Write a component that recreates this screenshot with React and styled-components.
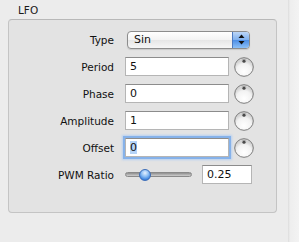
import React from 'react';
import styled, { createGlobalStyle } from 'styled-components';

const Global = createGlobalStyle`
  html, body { margin: 0; padding: 0; background: #ececec; }
  body { font-family: "DejaVu Sans", "Liberation Sans", sans-serif; }
`;

const Window = styled.div`
  width: 299px;
  height: 242px;
  display: flex;
  overflow: hidden;
  background: #ececec;
`;

const Main = styled.div`
  flex: 1;
  padding-left: 8px;
`;

const SideStrip = styled.div`
  width: 11px;
  background: linear-gradient(to right, #dcdcdc 0, #eeeeee 2px, #f3f3f3 100%);
`;

const Title = styled.div`
  height: 19px;
  padding-left: 10px;
  font-size: 10.5px;
  line-height: 20px;
  color: #1a1a1a;
`;

const Box = styled.div`
  width: 267px;
  height: 186px;
  border: 1px solid #c4c4c4;
  border-top-color: #b8b8b8;
  border-radius: 4px;
  background: #e3e3e3;
  padding-top: 6px;
  box-sizing: content-box;
`;

const Row = styled.div`
  height: 27px;
  display: flex;
  align-items: center;
`;

const Label = styled.div`
  width: 105px;
  text-align: right;
  font-size: 10.5px;
  color: #111;
  margin-right: ${p => (p.$popup ? 13 : 11)}px;
`;

const Field = styled.div`
  width: ${p => p.$w || 104}px;
  height: 19px;
  box-sizing: border-box;
  background: #fff;
  border: 1px solid #b5b5b5;
  border-top-color: #8c8c8c;
  font-size: 11px;
  line-height: 17px;
  padding-left: 4px;
  color: #111;
  margin-right: 5px;
  box-shadow: ${p => (p.$focus ? '0 0 0 2px #86b2ea, 0 0 2px 3px #b6d0f2' : 'none')};
  span {
    background: ${p => (p.$focus ? '#b5d3f7' : 'transparent')};
  }
`;

const Popup = styled.div`
  width: 123px;
  height: 18px;
  box-sizing: border-box;
  display: flex;
  border: 1px solid #8d8d8d;
  border-radius: 4px;
  overflow: hidden;
  background: linear-gradient(#ffffff, #f3f3f3 50%, #e6e6e6 51%, #f6f6f6);
  box-shadow: 0 1px 1px rgba(0, 0, 0, 0.12);
`;

const PopupText = styled.div`
  flex: 1;
  padding-left: 6px;
  font-size: 11px;
  line-height: 16px;
  color: #111;
`;

const Stepper = styled.div`
  width: 16px;
  border-left: 1px solid #4d7ac0;
  background: linear-gradient(#bcd6f7, #7fb0ee 50%, #4c8ee6 51%, #8cc0f7);
  display: flex;
  align-items: center;
  justify-content: center;
`;

const Slider = styled.div`
  width: 67px;
  height: 12px;
  position: relative;
  display: flex;
  align-items: center;
  margin-right: 10px;
`;

const Track = styled.div`
  width: 100%;
  height: 5px;
  border-radius: 3px;
  background: linear-gradient(#8f8f8f, #b5b5b5 60%, #cfcfcf);
  border: 1px solid #8a8a8a;
  box-sizing: border-box;
`;

const Thumb = styled.div`
  position: absolute;
  left: 14px;
  top: 0;
  width: 12px;
  height: 12px;
  border-radius: 50%;
  box-sizing: border-box;
  border: 1px solid #3a6cb8;
  background: radial-gradient(circle at 50% 30%, #e5f1ff 0, #8fc0f5 40%, #3f86e0 75%, #2a64c2 100%);
`;

function Knob() {
  return (
    <svg width="20" height="20" viewBox="0 0 20 20">
      <defs>
        <radialGradient id="kg" cx="50%" cy="75%" r="60%">
          <stop offset="0" stopColor="#ffffff" />
          <stop offset="0.7" stopColor="#f2f2f2" />
          <stop offset="1" stopColor="#d4d4d4" />
        </radialGradient>
      </defs>
      <circle cx="10" cy="10" r="9.3" fill="url(#kg)" stroke="#6f6f6f" strokeWidth="0.9" />
      <circle cx="10" cy="4.2" r="1.6" fill="#4a4a4a" />
      <path d="M7.8 3.6 A2.6 2.6 0 0 1 12.2 3.6" fill="none" stroke="#9a9a9a" strokeWidth="0.8" />
    </svg>
  );
}

function StepArrows() {
  return (
    <svg width="7" height="11" viewBox="0 0 7 11">
      <path d="M3.5 0.5 L6.5 4 L0.5 4 Z" fill="#111" />
      <path d="M3.5 10.5 L6.5 7 L0.5 7 Z" fill="#111" />
    </svg>
  );
}

const params = [
  { name: 'Period', value: '5' },
  { name: 'Phase', value: '0' },
  { name: 'Amplitude', value: '1' },
  { name: 'Offset', value: '0', focus: true }
];

export default function App() {
  return (
    <Window>
      <Global />
      <Main>
        <Title>LFO</Title>
        <Box>
          <Row>
            <Label $popup>Type</Label>
            <Popup>
              <PopupText>Sin</PopupText>
              <Stepper>
                <StepArrows />
              </Stepper>
            </Popup>
          </Row>
          {params.map(p => (
            <Row key={p.name}>
              <Label>{p.name}</Label>
              <Field $focus={p.focus}>
                <span>{p.value}</span>
              </Field>
              <Knob />
            </Row>
          ))}
          <Row>
            <Label>PWM Ratio</Label>
            <Slider>
              <Track />
              <Thumb />
            </Slider>
            <Field $w={50}>0.25</Field>
          </Row>
        </Box>
      </Main>
      <SideStrip />
    </Window>
  );
}
